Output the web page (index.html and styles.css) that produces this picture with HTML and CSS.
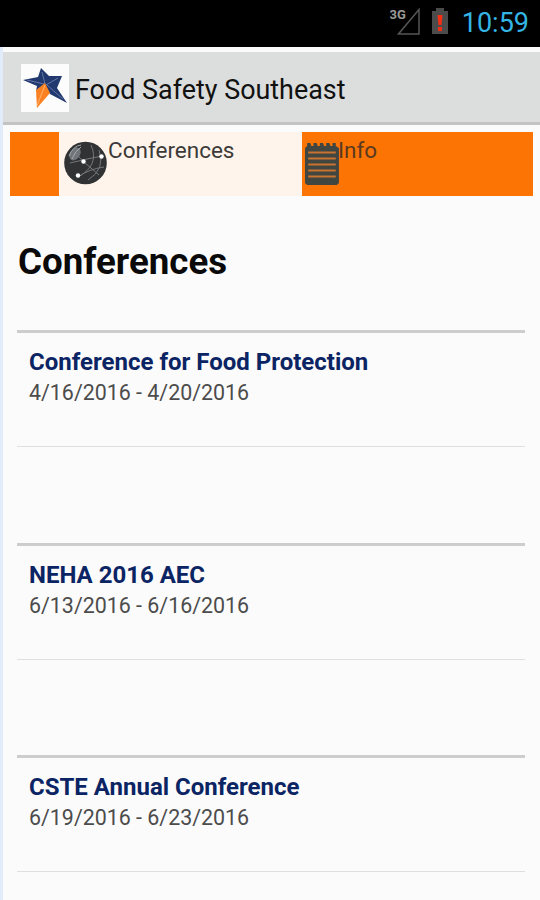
FILE: index.html
```html
<!DOCTYPE html>
<html lang="en">
<head>
    <meta charset="UTF-8">
    <meta name="viewport" content="width=device-width, initial-scale=1.0">
    <title>Food Safety Southeast</title>
    <link rel="stylesheet" href="styles.css">
</head>
<body>

<div class="status-bar">
    <span class="network">3G</span>
    <svg class="signal" width="24" height="27" viewBox="0 0 24 27">
        <path d="M22 1.5V26H1.500Z" fill="none" stroke="#555" stroke-width="1.5"/>
    </svg>
    <svg class="battery" width="18" height="27" viewBox="0 0 18 27">
        <path d="M5 0h8v3h4v23H1V3h4z" fill="#4b4b4b"/>
        <path d="M6.500 7h5l-1 10h-3zM7 19h4v4H7z" fill="#f52e12"/>
    </svg>
    <span class="clock">10:59</span>
</div>

<div class="app">
    <div class="header">
        <svg class="logo" width="48" height="48" viewBox="0 0 48 48">
            <rect width="48" height="48" fill="#fcfcfc"/>
            <path d="M20 4l8 8 13 0-5 12 10 15-17-9-5-8-9 5 1-5L2 16l15-3z" fill="#21396f"/>
            <path d="M21 8l3 12M6 16l17 4M37 14l-12 7M42 35L26 21" fill="none" stroke="#6576a5" stroke-width="1"/>
            <path d="M24 19l5 10-13 15-1-18z" fill="#fb8122"/>
            <path d="M24 21l-8 21" stroke="#ffb36c" stroke-width="1"/>
        </svg>
        <span class="title">Food Safety Southeast</span>
    </div>

    <div class="tabs">
        <div class="tab-edge"></div>
        <div class="tab active">
            <svg class="globe" width="44" height="44" viewBox="0 0 44 44">
                <circle cx="21.500" cy="22" r="21.300" fill="#303234"/>
                <ellipse cx="11" cy="13" rx="5" ry="7" transform="rotate(35 11 13)" fill="#70757a"/>
                <g fill="none" stroke="#74787b" stroke-width="1">
                    <path d="M27 4Q36 24 14 36M35 9Q42 28 24 39M6 22Q22 18 38 15M14 36Q25 28 40 26M10 9Q15 17 20 21L35 34"/>
                </g>
                <path d="M5 15q4-10 12-11M8 18q3-8 9-12" fill="none" stroke="#a4a9ad"/>
                <g fill="#fff">
                    <circle cx="19.500" cy="20.500" r="2.200"/>
                    <circle cx="37.500" cy="15.500" r="2.200"/>
                    <circle cx="14" cy="34.500" r="2.200"/>
                </g>
            </svg>
            <span class="label">Conferences</span>
        </div>
        <div class="tab">
            <svg class="notepad" width="35" height="43" viewBox="0 0 33 43" preserveAspectRatio="none">
                <path d="M2 4V1h3l1 3h2V1h3l1 3h2V1h3l1 3h2V1h3l1 3h2V1h3v3l3 2v35l-2 2H2l-2-2V6z" fill="#424640"/>
                <path d="M3 10.500h26M3 16.500h26M3 22.500h26M3 28.500h26M3 34.500h26" stroke="#c87330" stroke-width="1.800"/>
            </svg>
            <span class="label">Info</span>
        </div>
    </div>

    <h1>Conferences</h1>

    <div class="list">
        <div class="conference">
            <div class="details">
                <div class="name">Conference for Food Protection</div>
                <div class="date">4/16/2016 - 4/20/2016</div>
            </div>
        </div>
        <div class="conference">
            <div class="details">
                <div class="name">NEHA 2016 AEC</div>
                <div class="date">6/13/2016 - 6/16/2016</div>
            </div>
        </div>
        <div class="conference">
            <div class="details">
                <div class="name">CSTE Annual Conference</div>
                <div class="date">6/19/2016 - 6/23/2016</div>
            </div>
        </div>
    </div>
</div>

</body>
</html>
```
FILE: styles.css
```css
* {
    box-sizing: border-box;
}

body {
    margin: 0;
    background-color: #fbfbfb;
    font-family: Roboto, "Liberation Sans", sans-serif;
}

.status-bar {
    display: flex;
    align-items: flex-start;
    justify-content: flex-end;
    height: 47px;
    padding: 8px 11px 0 0;
    background-color: #000;
}

.network {
    margin-right: -9px;
    font-size: 13px;
    line-height: 13px;
    font-weight: bold;
    color: #999;
}

.battery {
    margin: 0 13px 0 10px;
}

.clock {
    font-size: 27px;
    line-height: 30px;
    color: #33b5e5;
}

.app {
    height: 853px;
    padding-top: 5px;
    border-left: 3px solid #e1ebfa;
    overflow: hidden;
}

.header {
    display: flex;
    align-items: center;
    height: 73px;
    padding-left: 18px;
    background-color: #dcdddd;
    border-bottom: 3px solid #c3c3c3;
}

.title {
    margin-left: 6px;
    padding-top: 5px;
    font-size: 26.9px;
    line-height: 36px;
    color: #111;
}

.logo {
    margin-top: 2px;
}

.tabs {
    display: flex;
    height: 64px;
    margin: 7px 7px 0;
}

.tab-edge {
    width: 49px;
    background-color: #fc7404;
}

.tab {
    display: flex;
    flex: 1;
    background-color: #fc7404;
    color: #5a3a20;
}

.tab.active {
    flex: none;
    width: 243px;
    padding-left: 3px;
    background-color: #fef4eb;
    color: #3c3a38;
}

.globe {
    margin: 9px 0 0 2px;
}

.notepad {
    margin: 10px -2px 0 3px;
}

.label {
    font-size: 22.5px;
    line-height: 37px;
}

h1 {
    margin: 43px 15px 0;
    font-size: 36.7px;
    line-height: 46px;
    color: #0a0a0a;
}

.list {
    margin: 45px 15px 0 14px;
}

.conference {
    height: 212.5px;
    border-top: 3px solid #cdcdcd;
}

.details {
    height: 114px;
    padding: 13px 12px 0;
    border-bottom: 1px solid #e0e0e0;
}

.name {
    font-size: 24px;
    line-height: 32px;
    font-weight: bold;
    color: #0b2463;
}

.date {
    font-size: 21.4px;
    line-height: 29px;
    color: #4c4c4c;
}
```
